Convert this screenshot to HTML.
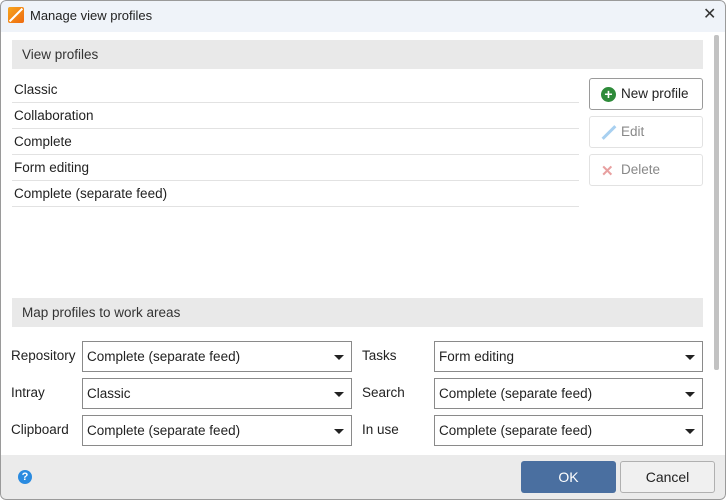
<!DOCTYPE html>
<html><head><style>
*{box-sizing:border-box;margin:0;padding:0}
body{width:726px;height:500px;overflow:hidden;font-family:"Liberation Sans",sans-serif;font-size:13.5px;color:#222;background:#fff;position:relative}
.a{position:absolute}
.win{left:0;top:0;width:726px;height:500px;border-radius:6px;overflow:hidden;background:#fff}
.frame{left:0;top:0;width:726px;height:500px;border:1px solid #9a9a9a;border-radius:6px;pointer-events:none}
.title{left:0;top:0;width:726px;height:32px;background:#eff3f9}
.sec{background:#e9e9e9;height:29px;line-height:29px;padding-left:10px;color:#333}
.row{left:12px;width:567px;height:26px;border-bottom:1px solid #e2e2e2;line-height:26px;padding-left:2px}
.btn{left:589px;width:114px;height:32px;border:1px solid #e2e2e2;border-radius:3px;line-height:30px;padding-left:31px;color:#888}
.lbl{line-height:30px}
.cb{height:31px;border:1px solid #8a8a8a;line-height:29px;padding-left:4px}
.cb:after{content:"";position:absolute;right:7px;top:13px;border-left:5px solid transparent;border-right:5px solid transparent;border-top:5px solid #222}
</style></head><body>
<div class="a win">
<div class="a title"></div>
<div class="a" style="left:8px;top:7px;width:16px;height:16px;background:linear-gradient(135deg,#f7a51e,#ee6a10);border-radius:2px"></div>
<div class="a" style="left:15px;top:6px;width:2px;height:18px;background:#fff;transform:rotate(45deg)"></div>
<div class="a" style="left:30px;top:8px;font-size:13px">Manage view profiles</div>
<div class="a" style="left:703px;top:4px;font-size:16px;color:#333">✕</div>
<div class="a sec" style="left:12px;top:40px;width:691px">View profiles</div>
<div class="a row" style="top:77px">Classic</div>
<div class="a row" style="top:103px">Collaboration</div>
<div class="a row" style="top:129px">Complete</div>
<div class="a row" style="top:155px">Form editing</div>
<div class="a row" style="top:181px">Complete (separate feed)</div>
<div class="a btn" style="top:78px;border-color:#9a9a9a;color:#222">New profile</div>
<div class="a" style="left:601px;top:87px;width:15px;height:15px;border-radius:50%;background:#2e8b3a;color:#fff;font-weight:bold;font-size:14px;line-height:15px;text-align:center">+</div>
<div class="a btn" style="top:116px">Edit</div>
<div class="a" style="left:600px;top:131px;width:18px;height:3px;background:#a8d0f0;transform:rotate(-45deg)"></div>
<div class="a btn" style="top:154px">Delete</div>
<div class="a" style="left:601px;top:162px;color:#e8a0a0;font-size:15px;font-weight:bold">✕</div>
<div class="a sec" style="left:12px;top:298px;width:691px">Map profiles to work areas</div>
<div class="a lbl" style="left:11px;top:341px">Repository</div>
<div class="a cb" style="left:82px;top:341px;width:270px">Complete (separate feed)</div>
<div class="a lbl" style="left:11px;top:378px">Intray</div>
<div class="a cb" style="left:82px;top:378px;width:270px">Classic</div>
<div class="a lbl" style="left:11px;top:415px">Clipboard</div>
<div class="a cb" style="left:82px;top:415px;width:270px">Complete (separate feed)</div>
<div class="a lbl" style="left:362px;top:341px">Tasks</div>
<div class="a cb" style="left:434px;top:341px;width:269px">Form editing</div>
<div class="a lbl" style="left:362px;top:378px">Search</div>
<div class="a cb" style="left:434px;top:378px;width:269px">Complete (separate feed)</div>
<div class="a lbl" style="left:362px;top:415px">In use</div>
<div class="a cb" style="left:434px;top:415px;width:269px">Complete (separate feed)</div>
<div class="a" style="left:714px;top:35px;width:5px;height:335px;background:#c2c2c2;border-radius:2px"></div>
<div class="a" style="left:0;top:455px;width:726px;height:45px;background:#ebebeb"></div>
<div class="a" style="left:18px;top:470px;width:14px;height:14px;border-radius:50%;background:#2a8be0;color:#fff;font-size:11px;font-weight:bold;text-align:center;line-height:14px">?</div>
<div class="a" style="left:521px;top:461px;width:95px;height:32px;background:#4a6fa0;border-radius:3px;color:#fff;text-align:center;line-height:32px;font-size:14px">OK</div>
<div class="a" style="left:620px;top:461px;width:95px;height:32px;background:#f0f0f0;border:1px solid #b0b0b0;border-radius:3px;text-align:center;line-height:30px;font-size:14px">Cancel</div>
<div class="a frame"></div>
</div>
</body></html>
